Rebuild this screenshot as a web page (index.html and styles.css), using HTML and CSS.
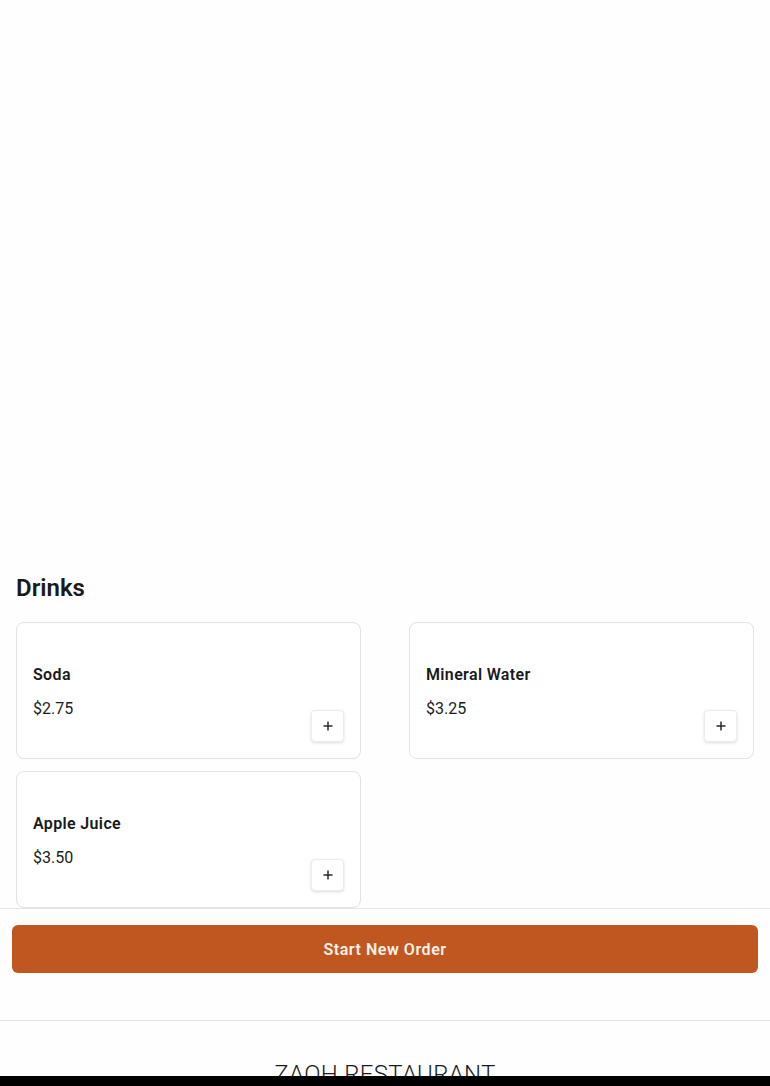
FILE: index.html
```html
<!DOCTYPE html>
<html lang="en">
<head>
<meta charset="utf-8">
<title>Menu</title>
<link rel="stylesheet" href="styles.css">
</head>
<body>
<div class="page">
  <div class="hero"></div>
  <section class="category">
    <h2 class="category-title">Drinks</h2>
    <div class="grid">
      <div class="card">
        <div class="info">
          <div class="name">Soda</div>
          <div class="price">$2.75</div>
        </div>
        <button class="add" aria-label="Add Soda"><svg width="12" height="12" viewBox="0 0 12 12"><path d="M6 1.5v9M1.5 6h9" stroke="#2a2a2a" stroke-width="1.5" fill="none"/></svg></button>
      </div>
      <div class="card">
        <div class="info">
          <div class="name">Mineral Water</div>
          <div class="price">$3.25</div>
        </div>
        <button class="add" aria-label="Add Mineral Water"><svg width="12" height="12" viewBox="0 0 12 12"><path d="M6 1.5v9M1.5 6h9" stroke="#2a2a2a" stroke-width="1.5" fill="none"/></svg></button>
      </div>
      <div class="card">
        <div class="info">
          <div class="name">Apple Juice</div>
          <div class="price">$3.50</div>
        </div>
        <button class="add" aria-label="Add Apple Juice"><svg width="12" height="12" viewBox="0 0 12 12"><path d="M6 1.5v9M1.5 6h9" stroke="#2a2a2a" stroke-width="1.5" fill="none"/></svg></button>
      </div>
    </div>
  </section>
  <div class="order-bar">
    <button class="order-btn">Start New Order</button>
  </div>
  <footer class="footer">
    <div class="brand">ZAOH RESTAURANT</div>
  </footer>
</div>
<div class="bottom-strip"></div>
</body>
</html>
```

FILE: styles.css
```css
* { box-sizing: border-box; }
html, body { margin: 0; padding: 0; }
body {
  background: #fefefe;
  font-family: Roboto, "Noto Sans", "Liberation Sans", sans-serif;
  color: #1c1c1c;
}
.hero { height: 570px; }
.category { padding: 0 16px; }
.category-title {
  margin: 0 0 16px;
  font-size: 24px;
  line-height: 36px;
  font-weight: 600;
  color: #1a1a1a;
}
.grid {
  display: grid;
  grid-template-columns: 1fr 1fr;
  column-gap: 48px;
  row-gap: 12px;
}
.card {
  display: flex;
  min-height: 137px;
  padding: 16px;
  border: 1px solid #e2e2e2;
  border-radius: 8px;
  background: #fff;
}
.info {
  flex: 1;
  display: flex;
  flex-direction: column;
  justify-content: center;
  gap: 10px;
  padding-top: 2px;
}
.name {
  font-size: 16px;
  line-height: 24px;
  font-weight: 600;
  letter-spacing: 0.35px;
  color: #1a1a1a;
}
.price {
  font-size: 16px;
  line-height: 24px;
  color: #1c1c1c;
}
.add {
  align-self: flex-end;
  width: 33px;
  height: 32px;
  padding: 0;
  display: flex;
  align-items: center;
  justify-content: center;
  background: #fff;
  border: 1px solid #ececec;
  border-radius: 4px;
  box-shadow: 0 1px 3px rgba(0,0,0,0.14);
}
.order-bar {
  border-top: 1px solid #e6e6e6;
  padding: 16px 12px 47px;
}
.order-btn {
  display: block;
  width: 100%;
  height: 48px;
  border: none;
  border-radius: 6px;
  background: #c05721;
  color: #fdf1e6;
  font-family: Roboto, "Noto Sans", "Liberation Sans", sans-serif;
  font-size: 16px;
  font-weight: 600;
  letter-spacing: 0.55px;
}
.footer {
  border-top: 1px solid #e2e2e2;
  padding: 37px 16px 32px;
  text-align: center;
}
.brand {
  font-size: 24px;
  line-height: 32px;
  font-weight: 300;
  letter-spacing: 0.3px;
  color: #1a1a1a;
}
.bottom-strip {
  position: fixed;
  left: 0;
  right: 0;
  bottom: 0;
  height: 10px;
  background: #000;
}
```
